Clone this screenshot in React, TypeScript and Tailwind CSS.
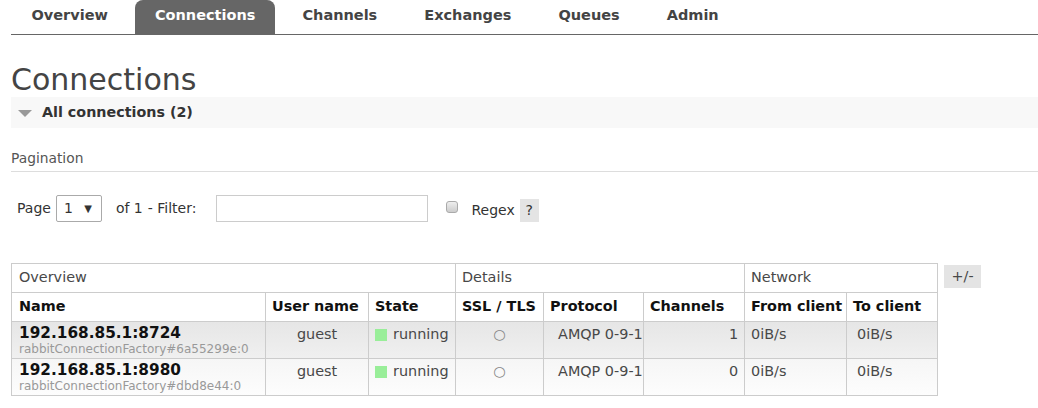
import React from "react";

const tabs = ["Overview", "Connections", "Channels", "Exchanges", "Queues", "Admin"];

interface Conn {
  name: string;
  client: string;
  user: string;
  state: string;
  protocol: string;
  channels: number;
  from: string;
  to: string;
}

const connections: Conn[] = [
  {
    name: "192.168.85.1:8724",
    client: "rabbitConnectionFactory#6a55299e:0",
    user: "guest",
    state: "running",
    protocol: "AMQP 0-9-1",
    channels: 1,
    from: "0iB/s",
    to: "0iB/s",
  },
  {
    name: "192.168.85.1:8980",
    client: "rabbitConnectionFactory#dbd8e44:0",
    user: "guest",
    state: "running",
    protocol: "AMQP 0-9-1",
    channels: 0,
    from: "0iB/s",
    to: "0iB/s",
  },
];

const cell = "border border-[#ccc] px-[6px] whitespace-nowrap overflow-visible";

export default function App() {
  return (
    <div
      className="w-[1038px] h-[408px] overflow-hidden bg-white pl-[11px] text-[#484848]"
      style={{ fontFamily: '"DejaVu Sans", Verdana, sans-serif' }}
    >
      {/* nav */}
      <ul className="flex h-[35px] gap-[8px] border-b border-[#666] pl-[1px]">
        {tabs.map((t) => (
          <li
            key={t}
            className={
              "flex items-center px-[19.5px] pb-[3px] text-[14.5px] font-bold " +
              (t === "Connections" ? "rounded-t-[8px] bg-[#666] text-white" : "text-[#444]")
            }
          >
            {t}
          </li>
        ))}
      </ul>

      <h1 className="mt-[27px] text-[30px] leading-[35px] text-[#444]">Connections</h1>

      <div className="flex h-[31px] items-center bg-[#f8f8f8]">
        <span className="ml-[7px] mr-[10px] mt-[1px] h-0 w-0 border-x-[7px] border-t-[7px] border-x-transparent border-t-[#999]" />
        <span className="text-[14.3px] font-bold text-[#333]">All connections (2)</span>
      </div>

      <div className="mt-[21px] border-b border-[#ddd] pb-[3px] text-[13.8px] leading-[19px] text-[#555]">
        Pagination
      </div>

      <div className="mt-[23px] flex items-center text-[14px] text-[#333]">
        <span className="ml-[6px]">Page</span>
        <div className="ml-[5px] flex h-[27px] w-[46px] items-center justify-between rounded-[2px] border border-[#aaa] pl-[7px] pr-[9px]">
          <span>1</span>
          <span className="text-[10px]">▼</span>
        </div>
        <span className="ml-[14px]">of 1</span>
        <span className="ml-[5px]">- Filter:</span>
        <div className="ml-[20px] h-[27px] w-[212px] border border-[#ccc] bg-white" />
        <span className="ml-[18px] mb-[4px] h-[12px] w-[12px] rounded-[3px] border border-[#aaa] bg-gradient-to-b from-[#eee] to-[#ccc]" />
        <span className="ml-[13px] mt-[3px]">Regex</span>
        <span className="ml-[5px] mt-[3px] flex h-[23px] w-[19px] items-center justify-center bg-[#e4e4e4]">?</span>
      </div>

      <div className="mt-[41px] flex items-start">
        <table className="w-[927px] table-fixed border-collapse border border-[#ccc] text-[14.4px]">
          <colgroup>
            <col className="w-[254px]" />
            <col className="w-[103px]" />
            <col className="w-[87px]" />
            <col className="w-[88px]" />
            <col className="w-[100px]" />
            <col className="w-[101px]" />
            <col className="w-[102px]" />
            <col className="w-[91px]" />
          </colgroup>
          <thead>
            <tr className="h-[29px] text-left">
              <th colSpan={3} className={cell + " px-[7px] align-middle font-normal"}>Overview</th>
              <th colSpan={3} className={cell + " align-middle font-normal"}>Details</th>
              <th colSpan={2} className={cell + " align-middle font-normal"}>Network</th>
            </tr>
            <tr className="h-[29px] text-left text-[#111]">
              <th className={cell + " px-[7px] align-middle"}>Name</th>
              <th className={cell + " align-middle"}>User name</th>
              <th className={cell + " align-middle"}>State</th>
              <th className={cell + " px-[5px] align-middle"}>SSL / TLS</th>
              <th className={cell + " align-middle"}>Protocol</th>
              <th className={cell + " px-[5px] align-middle"}>Channels</th>
              <th className={cell + " px-[5px] align-middle"}>From client</th>
              <th className={cell + " align-middle"}>To client</th>
            </tr>
          </thead>
          <tbody>
            {connections.map((c, i) => (
              <tr
                key={c.name}
                className={
                  "h-[37px] " +
                  (i === 0
                    ? "bg-gradient-to-b from-[#e6e6e6] to-[#f0f0f0]"
                    : "bg-gradient-to-b from-[#f6f6f6] to-[#fdfdfd]")
                }
              >
                <td className={cell + " px-[7px] pt-[3px] align-top"}>
                  <div className="text-[15.3px] font-bold leading-[17px] text-[#111]">{c.name}</div>
                  <div className="text-[12px] leading-[15px] text-[#999]">{c.client}</div>
                </td>
                <td className={cell + " pt-[2px] align-top text-center"}>{c.user}</td>
                <td className={cell + " pt-[2px] align-top"}>
                  <span className="flex items-center gap-[6px]">
                    <span className="h-[12px] w-[12px] bg-[#99ee99]" />
                    {c.state}
                  </span>
                </td>
                <td className={cell + " pt-[2px] align-top text-center text-[#888]"}>○</td>
                <td className={cell + " pt-[2px] align-top pl-[14px]"}>{c.protocol}</td>
                <td className={cell + " pt-[2px] align-top text-right"}>{c.channels}</td>
                <td className={cell + " pt-[2px] align-top"}>{c.from}</td>
                <td className={cell + " pt-[2px] align-top pl-[10px]"}>{c.to}</td>
              </tr>
            ))}
          </tbody>
        </table>
        <span className="ml-[6px] mt-[2px] flex h-[23px] w-[37px] items-center justify-center bg-[#e4e4e4] text-[14.4px]">
          +/-
        </span>
      </div>
    </div>
  );
}
